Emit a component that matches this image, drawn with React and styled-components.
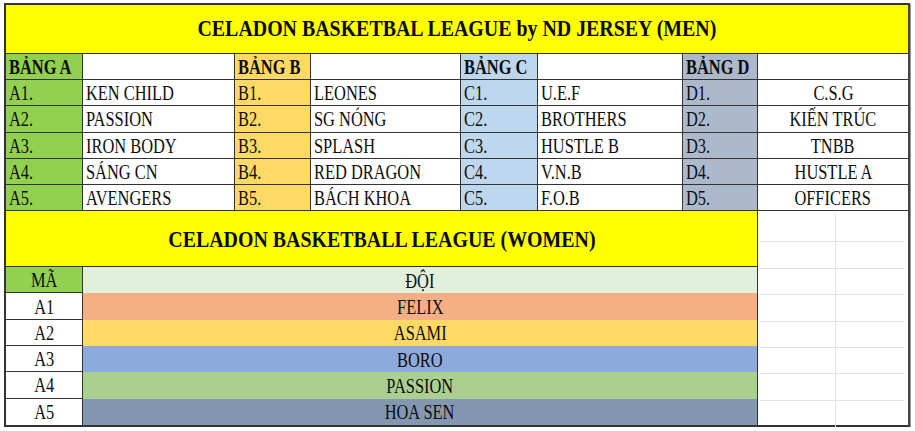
import React from 'react';
import styled, { createGlobalStyle } from 'styled-components';

const GlobalStyle = createGlobalStyle`
  html, body {
    margin: 0;
    padding: 0;
    background: #ffffff;
  }
  body {
    font-family: 'Liberation Serif', 'Times New Roman', serif;
    color: #111;
  }
`;

const LINE = '#333';

const Sheet = styled.div`
  box-sizing: border-box;
  width: 906px;
  margin: 3px 0 0 4px;
  border: 2px solid ${LINE};
  border-right-color: #444;
  box-shadow: 1px 1px 0 #999;
  background: #fff;
`;

const MenGrid = styled.div`
  display: grid;
  grid-template-columns: 77px 152px 76px 150px 77px 145px 75px 1fr;
  grid-template-rows: 49px repeat(6, 26.2px);
`;

const WomenGrid = styled.div`
  display: grid;
  grid-template-columns: 77px 675px 1fr;
  grid-template-rows: 56px repeat(6, 26.3px);
`;

const Title = styled.div`
  grid-column: ${p => p.$span};
  display: flex;
  align-items: center;
  justify-content: center;
  background: #ffff00;
  border-bottom: 1px solid ${LINE};
  border-right: ${p => (p.$edge ? `1px solid ${LINE}` : 'none')};
  box-sizing: border-box;
  padding-top: ${p => p.$pt || 0}px;
`;

const TitleText = styled.span`
  display: inline-block;
  font-size: 23px;
  font-weight: bold;
  white-space: nowrap;
  color: #0a0a0a;
  transform: scaleX(0.865);
  transform-origin: center;
`;

const Cell = styled.div`
  box-sizing: border-box;
  display: flex;
  align-items: center;
  justify-content: ${p => (p.$center ? 'center' : 'flex-start')};
  padding: 1px ${p => (p.$center ? 0 : 3)}px 0;
  background: ${p => p.$bg || '#fff'};
  border-right: ${p => (p.$last ? 'none' : `1px solid ${LINE}`)};
  border-bottom: ${p => (p.$noBottom ? 'none' : `1px solid ${LINE}`)};
  overflow: hidden;
  white-space: nowrap;
`;

const Txt = styled.span`
  display: inline-block;
  font-size: 20px;
  font-weight: ${p => (p.$bold ? 'bold' : 'normal')};
  line-height: 1;
  color: #0d0d0d;
  transform: scaleX(0.82);
  transform-origin: ${p => (p.$center ? 'center' : 'left')};
`;

const Blank = styled.div`
  grid-column: 3;
  grid-row: 1 / -1;
  display: grid;
  grid-template-columns: 76px 1fr;
  grid-template-rows: 29px 27px repeat(6, 26.3px);
  padding: 2px 4px 0 2px;
  box-sizing: border-box;
`;

const BlankCell = styled.div`
  border-right: ${p => (p.$right ? 'none' : '1px solid #e4e4e4')};
  border-bottom: ${p => (p.$bottom ? 'none' : '1px solid #e4e4e4')};
`;

const groups = [
  { name: 'BẢNG A', key: 'A', bg: '#92d050', teams: ['KEN CHILD', 'PASSION', 'IRON BODY', 'SÁNG CN', 'AVENGERS'] },
  { name: 'BẢNG B', key: 'B', bg: '#ffd966', teams: ['LEONES', 'SG NÓNG', 'SPLASH', 'RED DRAGON', 'BÁCH KHOA'] },
  { name: 'BẢNG C', key: 'C', bg: '#bdd7ee', teams: ['U.E.F', 'BROTHERS', 'HUSTLE B', 'V.N.B', 'F.O.B'] },
  { name: 'BẢNG D', key: 'D', bg: '#acb9ca', teams: ['C.S.G', 'KIẾN TRÚC', 'TNBB', 'HUSTLE A', 'OFFICERS'], center: true },
];

const women = [
  { code: 'A1', team: 'FELIX', bg: '#f4b084' },
  { code: 'A2', team: 'ASAMI', bg: '#ffd966' },
  { code: 'A3', team: 'BORO', bg: '#8ea9db' },
  { code: 'A4', team: 'PASSION', bg: '#a9d08e' },
  { code: 'A5', team: 'HOA SEN', bg: '#8497b0' },
];

function MenTable() {
  const rows = [];
  groups.forEach((g, gi) => {
    rows.push(
      <Cell key={`h${g.key}`} $bg={g.bg}><Txt $bold>{g.name}</Txt></Cell>,
      <Cell key={`hb${g.key}`} $last={gi === 3} />
    );
  });
  for (let i = 0; i < 5; i++) {
    groups.forEach((g, gi) => {
      rows.push(
        <Cell key={`${g.key}${i}`} $bg={g.bg}><Txt>{`${g.key}${i + 1}.`}</Txt></Cell>,
        <Cell key={`${g.key}t${i}`} $center={g.center} $last={gi === 3}>
          <Txt $center={g.center}>{g.teams[i]}</Txt>
        </Cell>
      );
    });
  }
  return (
    <MenGrid>
      <Title $span="1 / -1"><TitleText>CELADON BASKETBAL LEAGUE by ND JERSEY (MEN)</TitleText></Title>
      {rows}
    </MenGrid>
  );
}

function WomenTable() {
  const blanks = [];
  for (let r = 0; r < 8; r++) {
    for (let c = 0; c < 2; c++) {
      blanks.push(<BlankCell key={`${r}-${c}`} $right={c === 1} $bottom={r === 7} />);
    }
  }
  return (
    <WomenGrid>
      <Title $span="1 / 3" $edge $pt={3}><TitleText>CELADON BASKETBALL LEAGUE (WOMEN)</TitleText></Title>
      <Blank>{blanks}</Blank>
      <Cell $bg="#92d050" $center><Txt $center>MÃ</Txt></Cell>
      <Cell $bg="#e2efda" $center $noBottom><Txt $center>ĐỘI</Txt></Cell>
      {women.map((w, i) => (
        <React.Fragment key={w.code}>
          <Cell $center $noBottom={i === 4}><Txt $center>{w.code}</Txt></Cell>
          <Cell $bg={w.bg} $center $noBottom><Txt $center>{w.team}</Txt></Cell>
        </React.Fragment>
      ))}
    </WomenGrid>
  );
}

export default function App() {
  return (
    <>
      <GlobalStyle />
      <Sheet>
        <MenTable />
        <WomenTable />
      </Sheet>
    </>
  );
}
